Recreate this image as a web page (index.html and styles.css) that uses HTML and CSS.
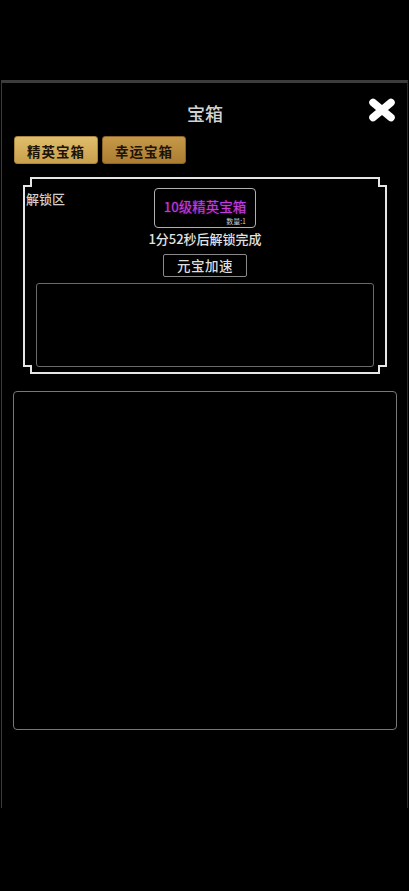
FILE: index.html
```html
<!DOCTYPE html>
<html lang="zh-CN">
<head>
    <meta charset="UTF-8">
    <meta name="viewport" content="width=device-width, initial-scale=1.0">
    <title>宝箱</title>
    <link rel="stylesheet" href="styles.css">
</head>
<body>

<div class="top-space"></div>

<div class="panel">
    <div class="header">
        <div class="title">宝箱</div>
        <div class="close-btn">
            <svg width="28" height="24" viewBox="0 0 28 24">
                <path d="M5 4.5 L23 19.5 M23 4.5 L5 19.5" stroke="#fff" stroke-width="7.5" stroke-linecap="round" fill="none"/>
            </svg>
        </div>
    </div>

    <div class="tabs">
        <div class="tab tab-active">精英宝箱</div>
        <div class="tab tab-lucky">幸运宝箱</div>
    </div>

    <div class="unlock-frame">
        <svg class="frame-line" width="364" height="197" viewBox="0 0 364 197">
            <path d="M8 1 H356 V9 H363 V189 H356 V196 H8 V189 H1 V9 H8 Z" stroke="#e6e6e6" stroke-width="2" fill="none"/>
        </svg>
        <div class="unlock-row">
            <div class="unlock-label">解锁区</div>
            <div class="unlock-center">
                <div class="chest-box">
                    <div class="chest-name">10级精英宝箱</div>
                    <div class="chest-count">数量:1</div>
                </div>
                <div class="timer">1分52秒后解锁完成</div>
                <div class="speed-btn">元宝加速</div>
            </div>
            <div></div>
        </div>
        <div class="slot-box"></div>
    </div>

    <div class="list-box"></div>
</div>

</body>
</html>
```

FILE: styles.css
```css
body {
    margin: 0;
    background-color: #000;
    font-family: "Noto Sans CJK SC", "Noto Sans", sans-serif;
    color: #ddd;
}

.top-space {
    height: 80px;
}

.panel {
    height: 725px;
    margin: 0 1px;
    border-top: 3px solid #3c3c3c;
    border-left: 1px solid #3a3a3a;
    border-right: 1px solid #2a2a2a;
    padding: 0 10px 0 11px;
}

.header {
    position: relative;
    padding-top: 17px;
    height: 26px;
    text-align: center;
}

.title {
    font-size: 18px;
    line-height: 26px;
    font-weight: 500;
    color: #d2d2d2;
}

.close-btn {
    position: absolute;
    right: 1px;
    top: 15px;
    width: 28px;
    height: 24px;
}

.tabs {
    display: flex;
    gap: 4px;
    margin-top: 10px;
    margin-left: 1px;
}

.tab {
    width: 84px;
    height: 28px;
    line-height: 28px;
    box-sizing: border-box;
    text-align: center;
    font-size: 13.5px;
    font-weight: 700;
    letter-spacing: 1px;
    color: #1c1408;
    border-radius: 3px;
}

.tab-active {
    background: linear-gradient(#e0bd6c, #c9a04c);
    border: 1px solid #a88440;
}

.tab-lucky {
    background: linear-gradient(#c69848, #ab7d32);
    border: 1px solid #8c6428;
}

.unlock-frame {
    position: relative;
    width: 364px;
    height: 197px;
    box-sizing: border-box;
    margin-top: 13px;
    margin-left: 10px;
    padding: 11px 13px 7px 13px;
}

.frame-line {
    position: absolute;
    left: 0;
    top: 0;
}

.unlock-row {
    position: relative;
    display: grid;
    grid-template-columns: 1fr auto 1fr;
    margin: 0 -10px;
}

.unlock-label {
    font-size: 13px;
    line-height: 16px;
    margin-top: 3px;
    font-weight: 500;
    color: #d0d0d0;
}

.unlock-center {
    display: flex;
    flex-direction: column;
    align-items: center;
}

.chest-box {
    position: relative;
    width: 102px;
    height: 40px;
    box-sizing: border-box;
    border: 1px solid #b0b0b0;
    border-radius: 4px;
}

.chest-name {
    text-align: center;
    font-size: 13.5px;
    line-height: 15px;
    margin-top: 10px;
    color: #c23ddc;
    text-shadow: 0 0 2px #7a1a90;
}

.chest-count {
    text-align: right;
    font-size: 7px;
    line-height: 8px;
    margin-right: 9px;
    margin-top: 3px;
    color: #cfcfcf;
}

.timer {
    font-size: 13px;
    line-height: 16px;
    margin-top: 3px;
    font-weight: 500;
    color: #e2e2e2;
}

.speed-btn {
    width: 84px;
    height: 23px;
    line-height: 21px;
    box-sizing: border-box;
    margin-top: 7px;
    text-align: center;
    font-size: 13.5px;
    font-weight: 500;
    letter-spacing: 0.5px;
    border: 1px solid #8a8a8a;
    border-radius: 2px;
    color: #dedede;
}

.slot-box {
    position: relative;
    height: 84px;
    margin-top: 6px;
    box-sizing: border-box;
    border: 1px solid #6a6a6a;
    border-radius: 3px;
}

.list-box {
    height: 339px;
    margin-top: 17px;
    box-sizing: border-box;
    border: 1px solid #777;
    border-radius: 4px;
}
```
